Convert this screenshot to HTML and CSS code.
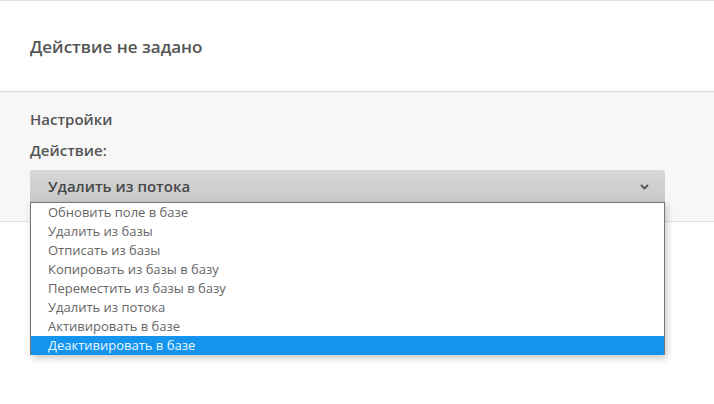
FILE: index.html
```html
<!DOCTYPE html>
<html lang="ru">
<head>
    <meta charset="UTF-8">
    <meta name="viewport" content="width=device-width, initial-scale=1.0">
    <title>Действие</title>
    <link rel="stylesheet" href="styles.css">
</head>
<body>
    <div class="header">
        <h2>Действие не задано</h2>
    </div>
    <div class="settings">
        <h3>Настройки</h3>
        <label>Действие:</label>
        <div class="select-wrap">
            <div class="select">
                <span>Удалить из потока</span>
                <svg class="chevron" width="9" height="6" viewBox="0 0 9 6">
                    <path d="M1 1 L4.5 4.5 L8 1" fill="none" stroke="#555" stroke-width="1.8"/>
                </svg>
            </div>
            <ul class="options">
                <li>Обновить поле в базе</li>
                <li>Удалить из базы</li>
                <li>Отписать из базы</li>
                <li>Копировать из базы в базу</li>
                <li>Переместить из базы в базу</li>
                <li>Удалить из потока</li>
                <li>Активировать в базе</li>
                <li class="active">Деактивировать в базе</li>
            </ul>
        </div>
    </div>
</body>
</html>
```

FILE: styles.css
```css
html, body {
    height: 100%;
}
body {
    margin: 0;
    min-height: 404px;
    font-family: "Open Sans", Arial, sans-serif;
    background: #fff;
    color: #555;
}
.header {
    border-top: 1px solid #e2e2e2;
    border-bottom: 1px solid #dcdcdc;
    height: 90px;
    padding: 0 30px;
    display: flex;
    align-items: center;
}
.header h2 {
    margin: 0;
    font-size: 17px;
    font-weight: 600;
    color: #555;
}
.settings {
    background: #f7f7f7;
    border-bottom: 1px solid #e2e2e2;
    padding: 17px 49px 19px 30px;
}
.settings h3 {
    margin: 0;
    font-size: 15px;
    line-height: 20px;
    font-weight: 600;
    color: #555;
}
.settings label {
    display: block;
    margin-top: 11px;
    font-size: 15px;
    line-height: 20px;
    font-weight: 600;
    color: #555;
}
.select-wrap {
    position: relative;
    margin-top: 10px;
}
.select {
    height: 32px;
    border-radius: 3px 3px 0 0;
    background: linear-gradient(#d7d7d7, #c9c9c9);
    display: flex;
    align-items: center;
    justify-content: space-between;
    padding: 0 16px 0 18px;
    font-size: 15px;
    font-weight: 600;
    color: #484848;
}
.chevron {
    margin-top: 1px;
}
.options {
    position: absolute;
    z-index: 10;
    top: 32px;
    left: 0;
    right: 0;
    margin: 0;
    padding: 0;
    list-style: none;
    background: #fff;
    border: 1px solid #777;
    border-bottom: none;
    box-shadow: 2px 3px 7px rgba(0, 0, 0, 0.22);
}
.options li {
    height: 19px;
    line-height: 19px;
    padding-left: 17px;
    font-size: 13px;
    color: #666;
}
.options li.active {
    background: #1594ee;
    color: #e8f8ff;
}
```
